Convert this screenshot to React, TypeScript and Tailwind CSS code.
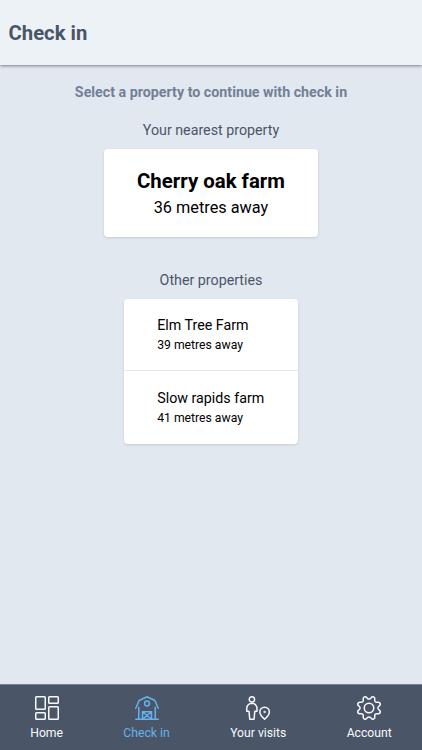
import type { ReactNode } from 'react';

const HomeIcon = () => (
  <>
    <rect x="0.75" y="0.75" width="9.5" height="12.5" rx="0.8" />
    <rect x="0.75" y="16.75" width="9.5" height="6.5" rx="0.8" />
    <rect x="13.75" y="0.75" width="9.5" height="6.5" rx="0.8" />
    <rect x="13.75" y="10.75" width="9.5" height="12.5" rx="0.8" />
  </>
);

const BarnIcon = () => (
  <>
    <path d="M.75 12.3 4.1 4.5 12 .75l7.9 3.75 3.35 7.8" />
    <path d="M.75 23.25h22.5M3.75 11.3v11.95M20.25 11.3v11.95" />
    <circle cx="12" cy="7.5" r="2.4" />
    <path d="M7.5 23.25v-7.5h9v7.5M7.5 15.75l9 7.5M16.5 15.75l-9 7.5" />
  </>
);

const VisitsIcon = () => (
  <>
    <circle cx="5.9" cy="3.4" r="2.65" />
    <path d="M5.9 7.2A5.15 5.15 0 0 0 .75 12.4v2.9H3l.75 7.95h4.3l.75-7.95H11v-2.9a5.15 5.15 0 0 0-5.1-5.2Z" />
    <path d="M18.6 11.25a4.75 4.75 0 0 1 4.75 4.75c0 2.2-2.9 5.7-4.75 7.25-1.85-1.55-4.75-5.05-4.75-7.25a4.75 4.75 0 0 1 4.75-4.75Z" />
    <circle cx="18.6" cy="16" r="0.4" />
  </>
);

const AccountIcon = () => (
  <>
    <circle cx="12" cy="12" r="4.75" />
    <path d="M10.546 2.438a1.957 1.957 0 0 0 2.908 0L14.4 1.4a1.959 1.959 0 0 1 3.41 1.413l-.071 1.4A1.958 1.958 0 0 0 19.79 6.271l1.4-.071A1.959 1.959 0 0 1 22.6 9.606l-1.038.94a1.957 1.957 0 0 0 0 2.908l1.039.94a1.959 1.959 0 0 1-1.413 3.41l-1.4-.071a1.958 1.958 0 0 0-2.056 2.056l.071 1.4A1.959 1.959 0 0 1 14.4 22.6l-.941-1.041a1.957 1.957 0 0 0-2.908 0L9.606 22.6A1.959 1.959 0 0 1 6.2 21.192l.072-1.4a1.958 1.958 0 0 0-2.056-2.056l-1.4.071A1.958 1.958 0 0 1 1.4 14.394l1.041-.94a1.957 1.957 0 0 0 0-2.908L1.4 9.606A1.958 1.958 0 0 1 2.813 6.2l1.4.071a1.958 1.958 0 0 0 2.054-2.06L6.2 2.81A1.959 1.959 0 0 1 9.606 1.4Z" />
  </>
);

const navItems: { label: string; icon: ReactNode; active?: boolean }[] = [
  { label: 'Home', icon: <HomeIcon /> },
  { label: 'Check in', icon: <BarnIcon />, active: true },
  { label: 'Your visits', icon: <VisitsIcon /> },
  { label: 'Account', icon: <AccountIcon /> },
];

const otherProperties = [
  { id: 1, name: 'Elm Tree Farm', distance: 39 },
  { id: 2, name: 'Slow rapids farm', distance: 41 },
];

const App = () => {
  return (
    <div className="flex h-screen flex-col bg-[#e2e8f0] font-[Roboto,sans-serif] text-black">
      <header className="flex h-[65px] shrink-0 items-center bg-[#edf2f7] px-[8.5px] pt-0.5 shadow-[0_1px_3px_rgba(0,0,0,0.45)]">
        <h1 className="text-[20.3px] font-bold text-[#4a5568]">Check in</h1>
      </header>

      <main className="flex flex-1 flex-col items-center">
        <p className="mt-4 text-[14.25px] leading-[22px] font-bold text-[#718096]">
          Select a property to continue with check in
        </p>

        <h2 className="mt-4 text-[14.25px] leading-[22px] text-[#4a5568]">Your nearest property</h2>
        <button className="mt-2 flex h-[88px] w-[214px] flex-col items-center justify-center rounded bg-white shadow-sm">
          <span className="text-[20.4px] leading-[30px] font-bold">Cherry oak farm</span>
          <span className="text-[16.3px] leading-6">36 metres away</span>
        </button>

        <h2 className="mt-[31.5px] text-[14.25px] leading-[22px] text-[#4a5568]">Other properties</h2>
        <ul className="mt-2 w-[173.6px] divide-y divide-[#e2e8f0] rounded bg-white shadow-sm">
          {otherProperties.map((property) => (
            <li key={property.id} className="flex h-[72.8px] flex-col justify-center pb-px pl-[33px]">
              <span className="text-[14.25px] leading-[22px]">{property.name}</span>
              <span className="text-[12.2px] leading-[18px]">{property.distance} metres away</span>
            </li>
          ))}
        </ul>
      </main>

      <nav className="flex h-[66px] shrink-0 justify-around border-t border-[#718096] bg-[#4a5568] pt-[11px]">
        {navItems.map((item) => (
          <a
            key={item.label}
            className={item.active ? 'flex flex-col items-center text-[#63b3ed]' : 'flex flex-col items-center text-[#f7fafc]'}
          >
            <svg
              viewBox="0 0 24 24"
              className="size-6"
              fill="none"
              stroke="currentColor"
              strokeWidth="1.5"
              strokeLinecap="round"
              strokeLinejoin="round"
            >
              {item.icon}
            </svg>
            <span className="mt-1 text-[12.2px] leading-[18px]">{item.label}</span>
          </a>
        ))}
      </nav>
    </div>
  );
};

export default App;
